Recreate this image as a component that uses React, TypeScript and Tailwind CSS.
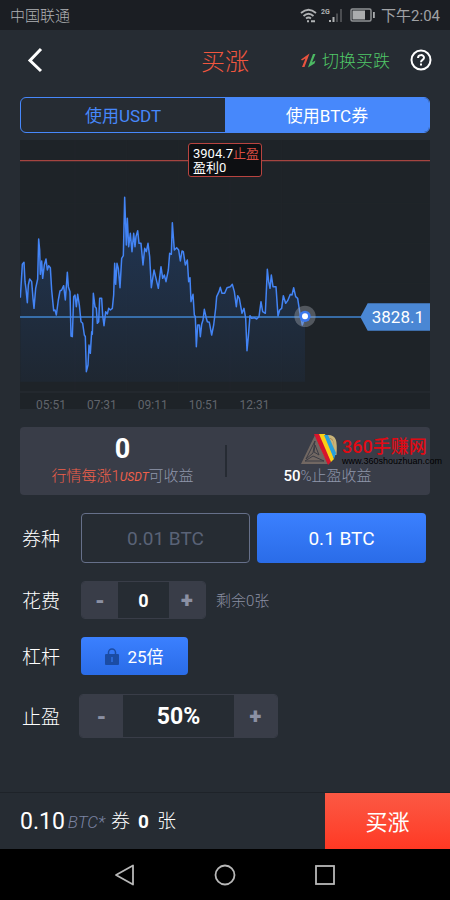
import React, { useState } from "react";

const pricePoints =
  "16,488 22,388 27,382 30,440 33,462 37,503 40,450 44,432 50,440 54,490 57,520 62,460 68,432 71,312 74,345 76,418 80,378 83,430 88,390 93,372 97,405 101,392 106,398 110,465 116,527 120,525 124,540 130,495 135,468 140,465 146,452 151,495 157,412 160,455 165,470 168,603 172,605 176,485 180,480 184,515 188,478 193,510 198,560 203,565 208,600 211,605 214,710 219,690 222,630 226,655 230,590 232,598 235,475 240,515 244,520 247,565 251,560 254,490 260,490 263,540 267,572 272,530 277,537 281,520 286,525 292,520 296,480 299,385 302,448 306,385 310,400 315,458 320,370 325,362 329,187 334,330 337,250 341,335 346,295 351,350 356,295 360,335 363,305 368,287 372,325 378,325 384,390 389,340 394,350 399,325 404,365 409,458 417,405 423,430 430,460 438,395 443,430 448,420 453,440 460,405 464,355 469,358 472,263 478,345 485,338 491,345 496,378 501,348 505,350 511,390 517,375 521,440 525,428 528,500 534,478 538,540 541,545 544,635 548,570 553,570 556,605 560,568 564,555 568,523 574,550 577,560 583,562 590,600 596,570 602,520 605,485 612,470 616,457 621,475 629,475 636,458 646,455 652,448 658,470 664,515 668,482 673,490 681,535 687,520 692,550 696,647 700,605 705,542 710,550 718,548 725,552 732,545 738,500 743,530 751,535 757,403 761,440 765,460 769,420 774,455 783,455 789,543 794,525 800,520 805,482 812,505 818,497 826,478 831,480 836,458 842,485 848,490 854,530 862,570 870,545";

const times = ["05:51", "07:31", "09:11", "10:51", "12:31"];

export default function App() {
  const [coupon, setCoupon] = useState("0.1");
  const [payWith, setPayWith] = useState("btc");
  const [amount, setAmount] = useState(0);
  const [profit, setProfit] = useState(50);

  return (
    <div className="flex min-h-screen w-full flex-col bg-[#262c33] font-['Roboto','Noto_Sans_CJK_SC',sans-serif] text-white">
      <StatusBar />
      <header className="grid h-[60px] grid-cols-[1fr_auto_1fr] items-center px-5">
        <button aria-label="返回" className="flex h-8 w-8 items-center">
          <svg viewBox="0 0 32 32" className="size-8" fill="none" stroke="#fff" strokeWidth="3">
            <path d="M21 5 10 16.500 21 27" />
          </svg>
        </button>
        <h1 className="pt-[3px] text-2xl font-light text-[#f0563f]">买涨</h1>
        <div className="flex items-center justify-end">
          <a href="#short" className="flex items-center gap-[6px] whitespace-nowrap text-[17px] font-light text-[#50c868]">
            <svg viewBox="0 0 15 15" className="size-[15px]">
              <path d="M0 6.500 8.500 0.500 3.500 14H1L4.500 5.500 1 7.500Z" fill="#e8533f" />
              <path d="M12 1H14.500L11 9.500 14.500 7.500 13.500 10.500 7 14.500Z" fill="#4cb963" />
            </svg>
            <span className="pt-[3px]">切换买跌</span>
          </a>
          <button aria-label="帮助" className="ml-5">
            <svg viewBox="0 0 22 22" className="-mr-[2px] size-[22px]" fill="none" stroke="#fff" strokeWidth="2">
              <circle cx="11" cy="11" r="9.500" />
              <path d="M8 9C8 5.200 14 5.200 14 8.800C14 11 11 10.800 11 13.200M11 14.600V16.600" />
            </svg>
          </button>
        </div>
      </header>

      <main className="flex flex-col px-5">
        <div className="mt-[7px] grid h-9 grid-cols-2 overflow-hidden rounded-md border border-[#4788fb] text-[17px]">
          <button
            onClick={() => setPayWith("usdt")}
            className={`pt-[3px] ${payWith === "usdt" ? "bg-[#4788fb]" : "text-[#4788fb]"}`}
          >
            使用USDT
          </button>
          <button
            onClick={() => setPayWith("btc")}
            className={`pt-[3px] ${payWith === "btc" ? "bg-[#4788fb]" : "text-[#4788fb]"}`}
          >
            使用BTC券
          </button>
        </div>

        <PriceChart />
        <Stats />

        <div className="mt-[18px] flex items-center">
          <span className="w-[61px] shrink-0 pt-[5px] pl-[2px] text-[19px] font-light">券种</span>
          <div className="mr-1 grid h-[50px] flex-1 grid-cols-2 gap-[7px]">
            <CouponButton name="0.01" selected={coupon} setSelected={setCoupon} />
            <CouponButton name="0.1" selected={coupon} setSelected={setCoupon} />
          </div>
        </div>

        <div className="mt-[18px] flex items-center">
          <label htmlFor="amount" className="w-[61px] shrink-0 pt-[5px] pl-[2px] text-[19px] font-light">花费</label>
          <div className="flex h-[38px] w-[125px] overflow-hidden rounded-sm border border-[#393d48]">
            <StepButton name="-" onClick={() => setAmount(Math.max(0, amount - 1))} />
            <input
              id="amount"
              value={amount}
              onChange={(e) => setAmount(Number(e.target.value) || 0)}
              className="w-0 flex-1 bg-transparent pt-[2px] text-center text-lg font-bold outline-0"
            />
            <StepButton name="+" onClick={() => setAmount(amount + 1)} />
          </div>
          <span className="ml-[10px] pt-[2px] text-[15px] font-light text-[#8a8fa2]">剩余0张</span>
        </div>

        <div className="mt-[18px] flex items-center">
          <span className="w-[61px] shrink-0 pt-[5px] pl-[2px] text-[19px] font-light">杠杆</span>
          <button className="flex h-[38px] w-[107px] items-center justify-center gap-2 rounded-sm bg-linear-to-b from-[#3b80ff] to-[#2a6ce8] text-[17px]">
            <LockIcon />
            <span className="pt-[3px]">25倍</span>
          </button>
        </div>

        <div className="mt-[19px] flex items-center">
          <label htmlFor="profit" className="w-[59px] shrink-0 pt-[5px] pl-[2px] text-[19px] font-light">止盈</label>
          <div className="flex h-11 w-[199px] overflow-hidden rounded-sm border border-[#393d48]">
            <StepButton wide name="-" onClick={() => setProfit(profit - 5)} />
            <input
              id="profit"
              value={profit + "%"}
              onChange={(e) => setProfit(parseInt(e.target.value) || 0)}
              className="w-0 flex-1 bg-transparent pt-[3px] text-center text-[23px] font-bold outline-0"
            />
            <StepButton wide name="+" onClick={() => setProfit(profit + 5)} />
          </div>
        </div>
      </main>

      <footer className="mt-auto flex h-[57px] border-t border-[#1e2329]">
        <div className="flex flex-1 items-center pt-[3px] pl-5 text-[19px]">
          <span className="text-[23px]">0.10</span>
          <i className="mr-[6px] ml-[3px] text-[17px] font-light text-[#7b84a3]">BTC*</i>
          <span className="font-light">
            券<b className="mx-2 font-bold">{amount}</b>张
          </span>
        </div>
        <button className="w-[125px] bg-linear-to-b from-[#fb5843] to-[#ff3823] pt-[3px] text-[22px]">买涨</button>
      </footer>
      <NavBar />
    </div>
  );
}

function StatusBar() {
  return (
    <div className="flex h-[30px] items-center justify-between bg-[#1b1e23] pr-[10px] pl-[10px] text-[15px] font-light text-[#b0b2b5]">
      <span className="pt-[2px]">中国联通</span>
      <div className="flex items-center gap-[6px]">
        <div className="flex items-center gap-1">
          <svg viewBox="0 0 17 15" className="h-[15px] w-[17px]" fill="none" stroke="#b0b2b4" strokeWidth="1.800">
            <path d="M1 5Q8.500-1.500 16 5M3.500 8Q8.500 3.500 13.500 8M6 10.500Q8.500 8.500 11 10.500" />
            <path d="M7 13.200H9M11 13.200H15" strokeWidth="2" />
          </svg>
          <svg viewBox="0 0 23 15" className="h-[15px] w-[23px]">
            <text x="0" y="6" fontSize="7" fontWeight="700" fill="#b0b2b4">2G</text>
            <path d="M8 12h2v2H8zM11.500 9h2v5h-2z" fill="#b0b2b4" />
            <path d="M15 5.500h2V14h-2zM19 1h2v13h-2z" fill="#4b4d51" />
          </svg>
        </div>
        <svg viewBox="0 0 25 14" className="h-[14px] w-[25px]">
          <rect x="1" y="1" width="20" height="12" rx="1.500" fill="none" stroke="#909295" strokeWidth="1.500" />
          <path d="M2.500 2.500H15V11.500H2.500zM23 4h1.800v6H23z" fill="#aaacae" />
        </svg>
        <span className="pt-[2px] font-normal text-[#a0a2a5]">下午2:04</span>
      </div>
    </div>
  );
}

function PriceChart() {
  return (
    <div className="relative mt-[7px] bg-[#1e2328]">
      <svg viewBox="15 15 1230 807" className="block w-full" fill="none">
        <defs>
          <linearGradient id="area" x1="0" y1="0" x2="0" y2="1">
            <stop offset="0" stopColor="#234a85" stopOpacity="0.500" />
            <stop offset="1" stopColor="#234a85" stopOpacity="0.100" />
          </linearGradient>
        </defs>
        <path d="M15 205H1245M15 325H1245M15 445H1245M180 15V770M335 15V770M490 15V770M645 15V770M800 15V770" stroke="#20252a" strokeWidth="3" />
        <path d="M15 771H1245" stroke="#292e35" strokeWidth="3" />
        <polygon points={pricePoints + " 870,740 16,740"} fill="url(#area)" />
        <path d="M15 77H1245" stroke="#a54440" strokeWidth="4" />
        <path d="M15 546H1050" stroke="#4185cf" strokeWidth="4" />
        <polyline points={pricePoints} stroke="#4384f5" strokeWidth="4.500" strokeLinejoin="round" />
        <circle cx="870" cy="544" r="32" fill="#a0a4ae" fillOpacity="0.400" />
        <circle cx="870" cy="544" r="17" fill="#3b78ee" />
        <circle cx="870" cy="544" r="9" fill="#fff" />
        <path d="M1036 546 1058 505H1245V587H1058Z" fill="#4a87d4" />
      </svg>
      <div className="absolute top-[1%] left-1/2 w-[74px] -translate-x-1/2 rounded-[3px] border border-[#b84440] bg-[#0d0f12] px-1 pt-[3px] pb-px text-[13px] leading-[14px] whitespace-nowrap">
        3904.7<span className="text-[#d84c42]">止盈</span>
        <br />
        盈利0
      </div>
      <span className="absolute top-[61%] right-[6px] text-[17px] leading-[27px]">3828.1</span>
      <div className="absolute -bottom-[3px] left-4 flex gap-[21px] text-[12px] leading-[14px] text-[#61656c]">
        {times.map((time) => <span key={time}>{time}</span>)}
      </div>
    </div>
  );
}

function Stats() {
  return (
    <div className="relative mt-[18px] grid h-[68px] grid-cols-2 rounded-sm bg-[#393d48] text-center text-[15px] leading-5 text-[#8f96ab]">
      <div className="flex flex-col items-center pt-[5px]">
        <b className="text-[27px] leading-[34px] text-white">0</b>
        <p className="whitespace-nowrap font-light">
          <span className="text-[#f0604a]">行情每涨1<i className="text-xs font-normal">USDT</i></span>可收益
        </p>
      </div>
      <div className="flex flex-col items-center pt-[5px]">
        <b className="text-[27px] leading-[34px] text-[#c9b478]">0</b>
        <p className="font-light"><span className="font-medium text-white">50</span>%止盈收益</p>
      </div>
      <div className="absolute top-[18px] left-1/2 h-8 w-[2px] bg-[#262b33]"></div>
      <SiteMark />
    </div>
  );
}

function SiteMark() {
  return (
    <div className="absolute top-[6px] -right-3 flex">
      <svg viewBox="0 0 38 34" className="h-[34px] w-[38px]" fill="none">
        <path d="M28 3.500C35 3.500 36 8 35 22" stroke="#c9b478" strokeWidth="3" />
        <path d="M15 2 1 31H28Z" fill="#716762" />
        <path d="M15 8 6 26 13 20ZM15 12 14 19 19 22ZM5 28 13 23 24 28Z" stroke="#3b3c44" strokeWidth="1" />
        <path d="M14 1H21L31 29 28 32Z" fill="#d7142c" />
        <path d="M19 1H25L34 26 31 29Z" fill="#fbcf16" />
        <path d="M24 2H28L36 20 34 26Z" fill="#28a0dc" />
      </svg>
      <div className="ml-1 flex flex-col items-start whitespace-nowrap">
        <span className="pt-[3px] text-lg leading-[21px] font-medium text-[#e10a14]">360手赚网</span>
        <span className="font-['Liberation_Sans',sans-serif] text-[9px] leading-[9px] text-black">www.360shouzhuan.com</span>
      </div>
    </div>
  );
}

function CouponButton({ name, selected, setSelected }: { name: string; selected: string; setSelected: (name: string) => void }) {
  return (
    <button
      onClick={() => setSelected(name)}
      className={`rounded-sm pt-[2px] text-[19px] ${selected === name ? "bg-linear-to-b from-[#3b80ff] to-[#2a6ce8]" : "border border-[#66708a] text-[#5a6377]"}`}
    >
      {name} BTC
    </button>
  );
}

function StepButton({ name, onClick, wide }: { name: string; onClick: () => void; wide?: boolean }) {
  return (
    <button
      onClick={onClick}
      className={`bg-[#393d48] pt-[2px] text-[22px] leading-6 font-black text-[#8b90a3] ${wide ? "w-[43px]" : "w-9"}`}
    >
      {name}
    </button>
  );
}

function LockIcon() {
  return (
    <svg viewBox="0 0 14 17" className="h-[17px] w-[14px]" fill="none">
      <path d="M3.500 7V4.500a3.500 3.500 0 0 1 7 0V7" stroke="#1b4ca4" strokeWidth="1.500" />
      <rect y="6" width="14" height="11" rx="1" fill="#1b4ca4" />
      <path d="M7 9v5" stroke="#2f6fe2" strokeWidth="1.500" />
    </svg>
  );
}

function NavBar() {
  return (
    <nav className="flex h-[51px] items-center justify-center gap-[78px] bg-black">
      <button aria-label="后退">
        <svg viewBox="0 0 22 22" className="size-[22px]" fill="none" stroke="#b8b8b8" strokeWidth="1.800" strokeLinejoin="round">
          <path d="M19 1.500V20.500L2 11Z" />
        </svg>
      </button>
      <button aria-label="主页">
        <svg viewBox="0 0 22 22" className="size-[22px]" fill="none" stroke="#b8b8b8" strokeWidth="1.800">
          <circle cx="11" cy="11" r="9.500" />
        </svg>
      </button>
      <button aria-label="最近任务">
        <svg viewBox="0 0 22 22" className="size-[22px]" fill="none" stroke="#b8b8b8" strokeWidth="1.800">
          <rect x="2" y="2" width="18" height="18" />
        </svg>
      </button>
    </nav>
  );
}
